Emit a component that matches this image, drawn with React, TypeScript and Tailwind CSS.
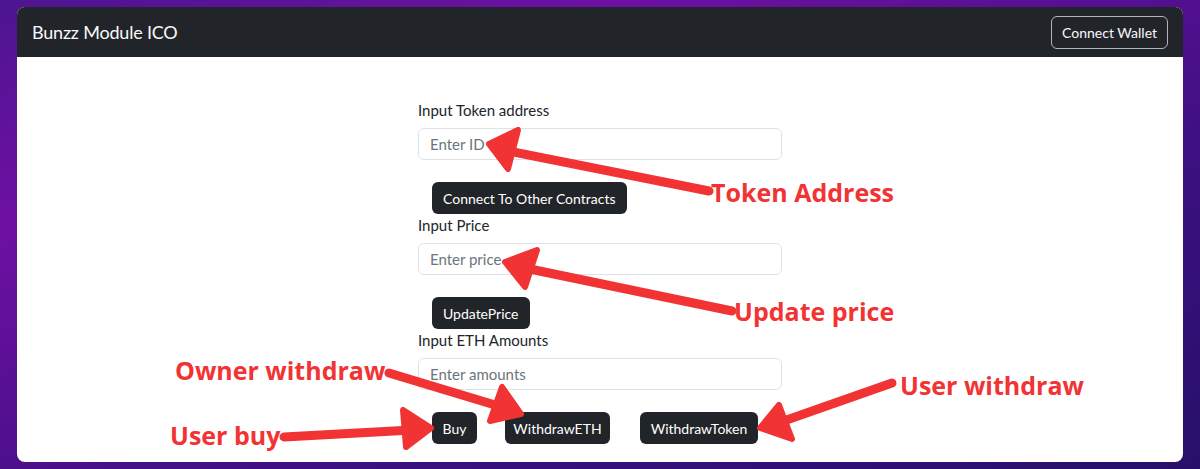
import React from "react";

const ui = { fontFamily: "Lato, 'Noto Sans', sans-serif" };
const note = { fontFamily: "'Open Sans', 'Noto Sans', sans-serif" };

const Field = ({ label, placeholder }: { label: string; placeholder: string }) => (
  <div className="flex flex-col">
    <label className="text-[15px] leading-[23px] text-[#212529]">{label}</label>
    <input
      placeholder={placeholder}
      className="mt-[6px] h-[32px] rounded-[6px] border border-[#dee2e6] px-[11px] text-[15px] text-[#212529] placeholder:text-[#6c757d] outline-none"
    />
  </div>
);

const DarkButton = ({ children, className = "" }: { children: React.ReactNode; className?: string }) => (
  <button className={`h-[32px] rounded-[6px] bg-[#212529] text-[14px] text-white ${className}`}>{children}</button>
);

const Arrows = () => (
  <svg className="pointer-events-none absolute inset-0" width="1200" height="469" viewBox="0 0 1200 469">
    <g fill="#f23333" stroke="#f23333" strokeLinejoin="round" strokeLinecap="round">
      {/* token address */}
      <line x1="709" y1="191" x2="508" y2="151" strokeWidth="9" />
      <polygon points="489,144 518,130 508,169" strokeWidth="6" />
      {/* update price */}
      <line x1="732" y1="311" x2="525" y2="268" strokeWidth="9" />
      <polygon points="505,262 537,250 525,287" strokeWidth="6" />
      {/* owner withdraw */}
      <line x1="389" y1="373" x2="505" y2="408" strokeWidth="9" />
      <polygon points="521,414 502,387 490,421" strokeWidth="6" />
      {/* user buy */}
      <line x1="284" y1="437" x2="412" y2="430" strokeWidth="9" />
      <polygon points="431,428 403,410 406,447" strokeWidth="6" />
      {/* user withdraw */}
      <line x1="892" y1="383" x2="778" y2="423" strokeWidth="9" />
      <polygon points="760,428 779,405 792,439" strokeWidth="6" />
    </g>
  </svg>
);

export default function App() {
  return (
    <div className="relative h-[469px] w-[1200px] overflow-hidden bg-[linear-gradient(160deg,#4d1590_0%,#6e10a3_25%,#3c1080_65%,#27106a_100%)] px-[17px] pt-[7px]">
      <div className="flex h-[455px] flex-col overflow-hidden rounded-[8px] bg-white" style={ui}>
        <nav className="flex h-[50px] shrink-0 items-center justify-between bg-[#212529] pl-[15px] pr-[15px]">
          <span className="text-[18px] tracking-[-0.2px] text-[#f8f9fa]">Bunzz Module ICO</span>
          <button className="h-[33px] rounded-[6px] border border-[#adb5bd] px-[10px] text-[14px] text-[#f8f9fa]">
            Connect Wallet
          </button>
        </nav>
        <div className="flex justify-center pt-[42px]">
          <div className="flex w-[364px] flex-col">
            <Field label="Input Token address" placeholder="Enter ID" />
            <div className="mt-[22px] pl-[14px]">
              <DarkButton className="px-[11px]">Connect To Other Contracts</DarkButton>
            </div>
            <Field label="Input Price" placeholder="Enter price" />
            <div className="mt-[22px] pl-[14px]">
              <DarkButton className="px-[11px]">UpdatePrice</DarkButton>
            </div>
            <Field label="Input ETH Amounts" placeholder="Enter amounts" />
            <div className="mt-[22px] flex pl-[14px]">
              <DarkButton className="w-[45px]">Buy</DarkButton>
              <DarkButton className="ml-[28px] w-[105px]">WithdrawETH</DarkButton>
              <DarkButton className="ml-[30px] w-[118px]">WithdrawToken</DarkButton>
            </div>
          </div>
        </div>
      </div>
      <Arrows />
      <div className="absolute left-[711px] top-[174px] text-[25px] font-bold text-[#f23333]" style={note}>Token Address</div>
      <div className="absolute left-[734px] top-[293px] text-[25px] font-bold text-[#f23333]" style={note}>Update price</div>
      <div className="absolute left-[175px] top-[352px] text-[25px] font-bold text-[#f23333]" style={note}>Owner withdraw</div>
      <div className="absolute left-[170px] top-[417px] text-[25px] font-bold text-[#f23333]" style={note}>User buy</div>
      <div className="absolute left-[900px] top-[367px] text-[25px] font-bold text-[#f23333]" style={note}>User withdraw</div>
    </div>
  );
}
